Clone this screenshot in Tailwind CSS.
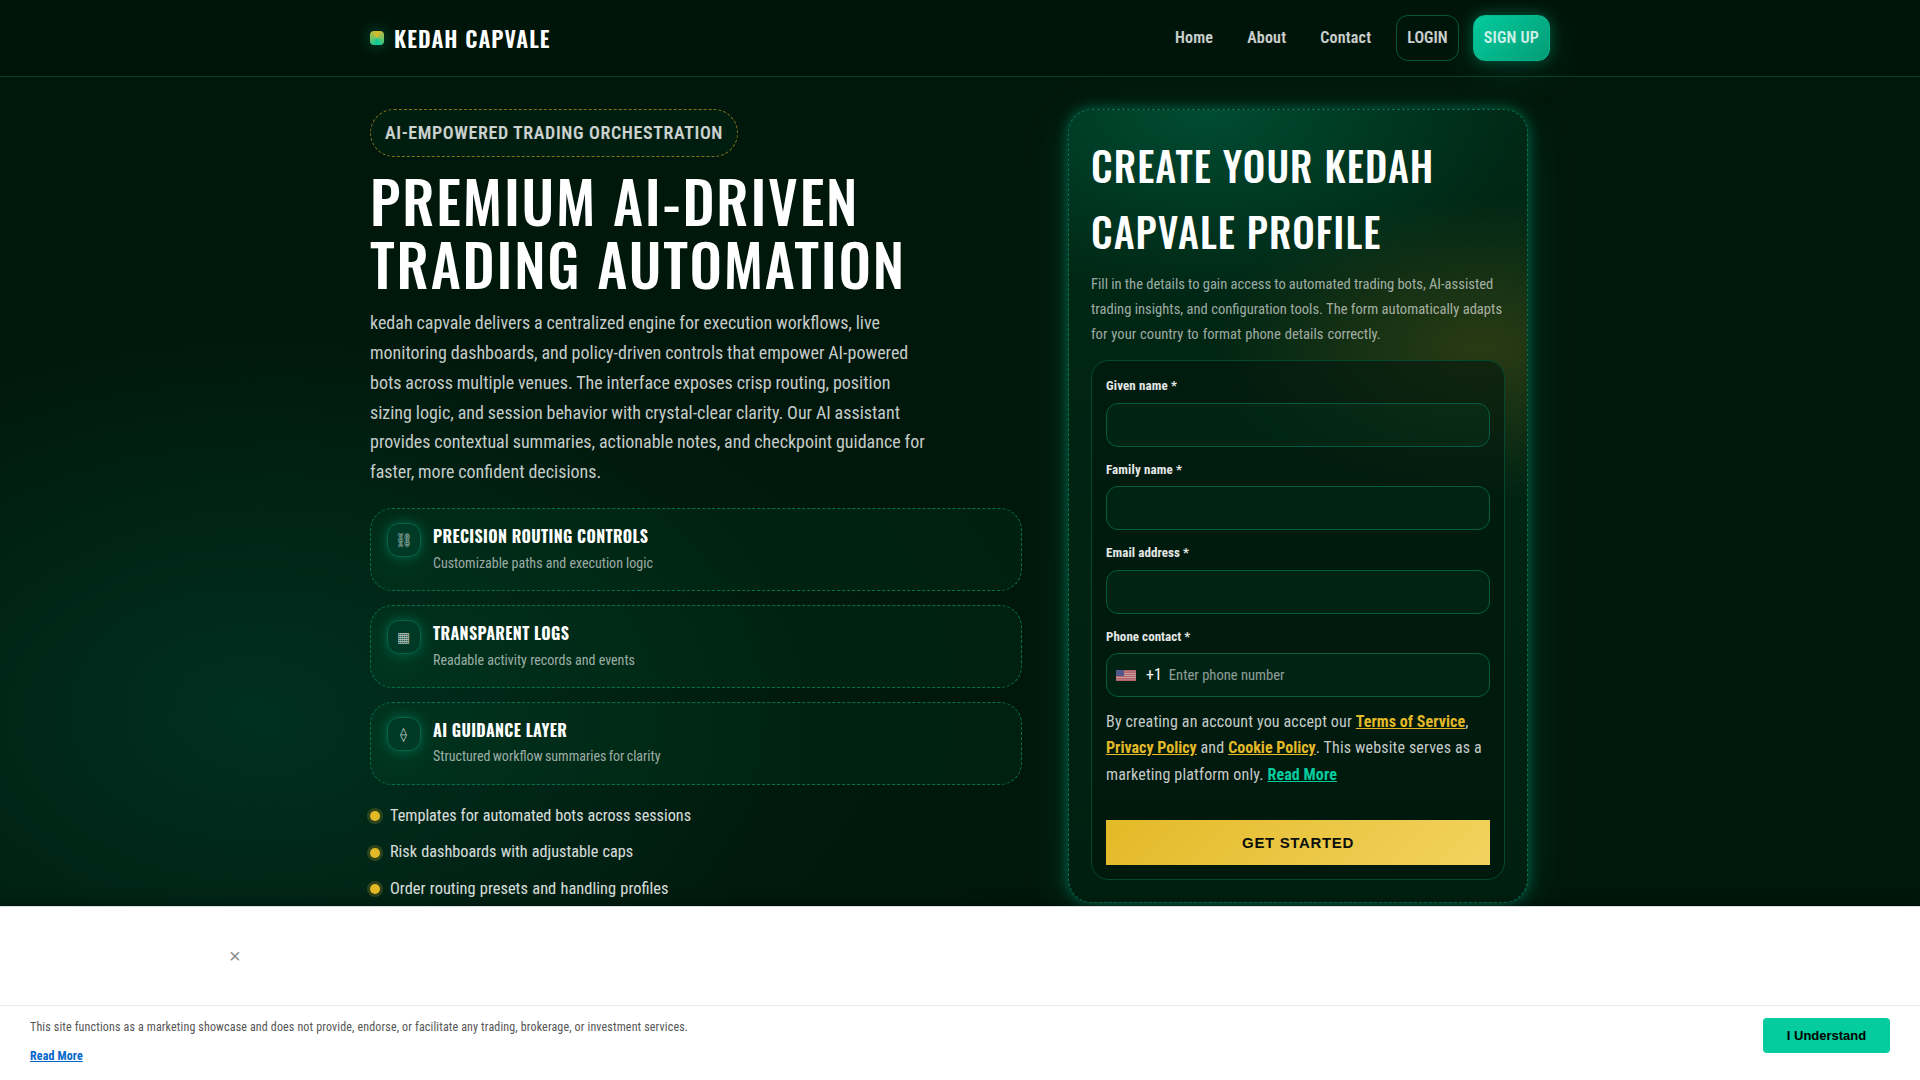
<!DOCTYPE html>
<html lang="en">
<head>
<meta charset="utf-8">
<title>Kedah Capvale</title>
<script src="https://cdn.jsdelivr.net/npm/@tailwindcss/browser@4"></script>
</head>
<body class="relative h-[1080px] overflow-hidden bg-[#00170b] bg-[radial-gradient(560px_380px_at_250px_720px,rgba(0,110,92,0.22),transparent),radial-gradient(800px_480px_at_300px_700px,rgba(0,100,60,0.1),transparent)] font-['Roboto_Condensed',Roboto,sans-serif] text-base leading-[1.65] text-white">

<header class="border-b border-[#04402c] bg-[#00140a]/50">
  <div class="mx-auto flex h-[76px] w-[1180px] items-center justify-between">
    <div class="flex items-center gap-2.5">
      <span class="size-3.5 rounded bg-[conic-gradient(from_180deg,#04cc9e,#e3b927,#04cc9e)] shadow-[0_0_14px_rgba(4,204,158,0.35)]"></span>
      <span class="font-['Oswald'] text-[22px] font-semibold leading-none tracking-[1.08px]">KEDAH CAPVALE</span>
    </div>
    <nav class="flex items-center gap-3.5 text-base font-semibold tracking-[0.2px] text-white/80">
      <a class="px-2.5 py-2.5">Home</a>
      <a class="px-2.5 py-2.5">About</a>
      <a class="mr-px px-2.5 py-2.5">Contact</a>
      <a class="rounded-xl border border-[#04573f] px-2.5 py-[10.3px] tracking-[0.05px]">LOGIN</a>
      <a class="rounded-xl border border-[#04b88c] bg-[linear-gradient(135deg,#04cc9e,#049c76)] px-2.5 py-[10.3px] shadow-[0_0_14px_rgba(4,204,158,0.35),0_10px_40px_rgba(4,204,158,0.12)]">SIGN UP</a>
    </nav>
  </div>
</header>

<main class="mx-auto flex w-[1180px] items-start gap-[46px] pt-8">
  <section class="w-[652px]">
    <div class="w-fit rounded-3xl border border-dashed border-[#85741c] bg-[#001e0f] px-3.5 py-2 text-lg font-semibold leading-[29.7px] tracking-[0.62px] text-white/80">AI-EMPOWERED TRADING ORCHESTRATION</div>
    <h1 class="mt-3 font-['Oswald'] text-[57.6px] font-medium leading-[63.3px] tracking-[1.82px]">PREMIUM AI-DRIVEN<br>TRADING AUTOMATION</h1>
    <p class="mt-[13px] w-[570px] text-lg leading-[29.75px] text-white/78 [word-spacing:-0.3px]">kedah capvale delivers a centralized engine for execution workflows, live<br>monitoring dashboards, and policy-driven controls that empower AI-powered<br>bots across multiple venues. The interface exposes crisp routing, position<br>sizing logic, and session behavior with crystal-clear clarity. Our AI assistant<br>provides contextual summaries, actionable notes, and checkpoint guidance for<br>faster, more confident decisions.</p>

    <div class="mt-[21px] grid gap-3.5">
      <div class="flex h-[83px] items-start gap-3 rounded-[22px] border border-dashed border-[#04704f] bg-[#04b450]/6 px-4 py-3.5">
        <span class="flex size-[34px] items-center justify-center rounded-xl border border-[#04644a] bg-[#003a26] pr-px text-sm text-white/70 shadow-[0_0_12px_rgba(4,204,158,0.3),0_8px_30px_rgba(4,204,158,0.1)]">⛓</span>
        <div>
          <h3 class="font-['Oswald'] text-base font-bold leading-[26.4px] tracking-[0.35px]">PRECISION ROUTING CONTROLS</h3>
          <p class="mt-[3px] text-sm leading-[23.1px] text-white/62">Customizable paths and execution logic</p>
        </div>
      </div>
      <div class="flex h-[83px] items-start gap-3 rounded-[22px] border border-dashed border-[#04704f] bg-[#04b450]/6 px-4 py-3.5">
        <span class="flex size-[34px] items-center justify-center rounded-xl border border-[#04644a] bg-[#003a26] pr-px text-sm text-white/70 shadow-[0_0_12px_rgba(4,204,158,0.3),0_8px_30px_rgba(4,204,158,0.1)]">▦</span>
        <div>
          <h3 class="font-['Oswald'] text-base font-bold leading-[26.4px] tracking-[0.35px]">TRANSPARENT LOGS</h3>
          <p class="mt-[3px] text-sm leading-[23.1px] text-white/62">Readable activity records and events</p>
        </div>
      </div>
      <div class="flex h-[83px] items-start gap-3 rounded-[22px] border border-dashed border-[#04704f] bg-[#04b450]/6 px-4 py-3.5">
        <span class="flex size-[34px] items-center justify-center rounded-xl border border-[#04644a] bg-[#003a26] pr-px text-sm text-white/70 shadow-[0_0_12px_rgba(4,204,158,0.3),0_8px_30px_rgba(4,204,158,0.1)]">⟠</span>
        <div>
          <h3 class="font-['Oswald'] text-base font-bold leading-[26.4px] tracking-[0.35px]">AI GUIDANCE LAYER</h3>
          <p class="mt-0.5 text-sm leading-[23.1px] text-white/62 [word-spacing:-0.9px]">Structured workflow summaries for clarity</p>
        </div>
      </div>
    </div>

    <ul class="mt-[18px] grid gap-2.5 text-[16.2px] leading-[26.5px] text-white/85">
      <li class="flex items-center gap-2.5"><span class="size-2.5 rounded-full bg-[#e3b927] shadow-[0_0_0_3px_rgba(227,185,39,0.2)]"></span><span class="[word-spacing:0.2px]">Templates for automated bots across sessions</span></li>
      <li class="flex items-center gap-2.5"><span class="size-2.5 rounded-full bg-[#e3b927] shadow-[0_0_0_3px_rgba(227,185,39,0.2)]"></span><span class="[word-spacing:0.6px]">Risk dashboards with adjustable caps</span></li>
      <li class="flex items-center gap-2.5"><span class="size-2.5 rounded-full bg-[#e3b927] shadow-[0_0_0_3px_rgba(227,185,39,0.2)]"></span><span class="text-[16.4px] [word-spacing:0.6px]">Order routing presets and handling profiles</span></li>
    </ul>
  </section>

  <section class="h-[794px] w-[460px] rounded-3xl border border-dashed border-[#04704f] bg-[#002413] bg-[radial-gradient(320px_190px_at_30%_0%,rgba(0,125,90,0.42),transparent),radial-gradient(270px_150px_at_90%_30%,rgba(120,100,20,0.34),transparent),linear-gradient(180deg,#002815,#001f10)] p-[22px] shadow-[0_0_14px_rgba(4,204,158,0.4),0_10px_50px_rgba(4,204,158,0.14)]">
    <h2 class="font-['Oswald'] text-[40px] font-medium leading-[66px] tracking-[1.06px]">CREATE YOUR KEDAH CAPVALE PROFILE</h2>
    <p class="mt-[8px] w-[416px] text-[14.6px] leading-[25px] text-white/62"><span class="[word-spacing:-0.2px]">Fill in the details to gain access to automated trading bots, AI-assisted</span><br>trading insights, and configuration tools. The form automatically adapts<br><span class="[word-spacing:0.6px]">for your country to format phone details correctly.</span></p>

    <form class="mt-[13px] h-[520px] rounded-[18px] border border-[#04482f] bg-[#00140a]/55 p-3.5">
      <label class="block text-[13px] font-bold leading-[21.5px] tracking-[0.12px] text-white/90">Given name *</label>
      <div class="mt-1.5 h-11 rounded-xl border border-[#045c42] bg-[#04b460]/6"></div>
      <label class="mt-3 block text-[13px] font-bold leading-[21.5px] tracking-[0.12px] text-white/90">Family name *</label>
      <div class="mt-1.5 h-11 rounded-xl border border-[#045c42] bg-[#04b460]/6"></div>
      <label class="mt-3 block text-[13px] font-bold leading-[21.5px] tracking-[0.08px] text-white/90">Email address *</label>
      <div class="mt-1.5 h-11 rounded-xl border border-[#045c42] bg-[#04b460]/6"></div>
      <label class="mt-3 block text-[13px] font-bold leading-[21.5px] tracking-[0.04px] text-white/90">Phone contact *</label>
      <div class="mt-1.5 flex h-11 items-center rounded-xl border border-[#045c42] bg-[#04b460]/6 pl-[9px]">
        <svg class="h-[11px] w-5 opacity-80" viewBox="0 0 20 11" shape-rendering="crispEdges">
          <rect width="20" height="11" fill="#f0c4ca"/>
          <path d="M0 .5h20M0 2.5h20M0 4.5h20M0 6.5h20M0 8.5h20M0 10.5h20" stroke="#e8707f" stroke-width="1"/>
          <path d="M0 1.5h20M0 9.5h20" stroke="#e58f9a" stroke-width="1"/>
          <rect width="8" height="6" fill="#6664a8"/>
        </svg>
        <span class="ml-2.5 text-base">+1</span>
        <span class="ml-[7px] text-[14.6px] text-white/55">Enter phone number</span>
      </div>
      <p class="mt-3 text-base leading-[26.4px] tracking-[0.15px] text-white/78">By creating an account you accept our <a class="font-bold tracking-[0.05px] text-[#e3b927] underline">Terms of Service</a>, <a class="font-bold tracking-normal text-[#e3b927] underline">Privacy Policy</a> and <a class="font-bold tracking-normal text-[#e3b927] underline">Cookie Policy</a>. This website serves as a marketing platform only. <a class="font-bold tracking-[0.1px] text-[#04cc9e] underline">Read More</a></p>
      <button class="mt-[32px] block h-[45px] w-full bg-[linear-gradient(135deg,#e3b927,#f3d35f)] pt-px text-center font-['Liberation_Sans'] text-[15px] font-bold tracking-[0.65px] text-[#0a0f0a]">GET STARTED</button>
    </form>
  </section>
</main>

<div class="absolute inset-x-0 bottom-0 flex h-[174px] flex-col border-t border-[#dcdcdc] bg-white shadow-[0_-2px_12px_rgba(0,0,0,0.35)]">
  <div class="h-[98px] pl-[229px] pt-[34px] font-['Liberation_Sans'] text-[20px] leading-[30px] text-[#8c8c8c]">×</div>
  <div class="flex flex-1 items-start justify-between border-t border-[#eaeaea] px-[30px] pt-3">
    <div class="text-xs leading-[19.8px] tracking-[0.15px] text-[#555]">
      <p>This site functions as a marketing showcase and does not provide, endorse, or facilitate any trading, brokerage, or investment services.</p>
      <a class="mt-[9px] block w-fit font-bold text-[#0066cc] underline">Read More</a>
    </div>
    <button class="h-[35px] w-[127px] rounded bg-[#04cc9e] font-['Liberation_Sans'] text-[13px] font-bold text-black">I Understand</button>
  </div>
</div>
</body>
</html>
